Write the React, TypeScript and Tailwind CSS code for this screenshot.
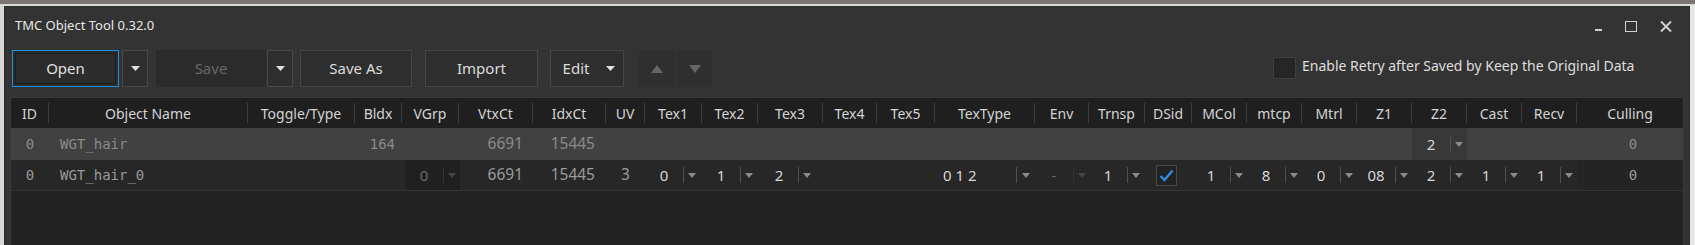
import React from "react";

const COLS =
  "grid grid-cols-[38px_199px_107px_47px_57px_74px_73px_39px_57px_56px_65px_54px_58px_100px_54px_56px_47px_55px_55px_55px_55px_55px_55px_55px_106px]";

const SANS = "font-['Noto_Sans',sans-serif]";
const MONO = "font-['DejaVu_Sans_Mono',monospace]";

const headers = [
  "ID", "Object Name", "Toggle/Type", "Bldx", "VGrp", "VtxCt", "IdxCt", "UV",
  "Tex1", "Tex2", "Tex3", "Tex4", "Tex5", "TexType", "Env", "Trnsp", "DSid",
  "MCol", "mtcp", "Mtrl", "Z1", "Z2", "Cast", "Recv", "Culling",
];

function Tri({ color = "#e0e0e0", w = 9, h = 5 }: { color?: string; w?: number; h?: number }) {
  return (
    <svg width={w} height={h} viewBox={`0 0 ${w} ${h}`}>
      <polygon points={`0,0 ${w},0 ${w / 2},${h}`} fill={color} />
    </svg>
  );
}

function TriUp({ color = "#666" }: { color?: string }) {
  return (
    <svg width={12} height={8} viewBox="0 0 12 8">
      <polygon points="0,8 12,8 6,0" fill={color} />
    </svg>
  );
}

function TriDown({ color = "#666" }: { color?: string }) {
  return (
    <svg width={12} height={8} viewBox="0 0 12 8">
      <polygon points="0,0 12,0 6,8" fill={color} />
    </svg>
  );
}

function Combo({
  value,
  disabled = false,
  bg = "",
}: {
  value: string;
  disabled?: boolean;
  bg?: string;
}) {
  return (
    <div className={`flex h-full w-[55px] items-center ${bg}`}>
      <span
        className={`w-[38px] text-center text-[15px] ${SANS} ${disabled ? "text-[#6a6a6a]" : "text-[#d6d6d6]"}`}
      >
        {value}
      </span>
      <span className={`h-[16px] w-px ${disabled ? "bg-[#333]" : "bg-[#4e4e4e]"}`} />
      <span className="flex w-[16px] justify-center">
        <Tri color={disabled ? "#444" : "#8a8a8a"} w={8} h={5} />
      </span>
    </div>
  );
}

function Btn({
  children,
  className = "",
}: {
  children: React.ReactNode;
  className?: string;
}) {
  return (
    <div
      className={`flex h-[37px] items-center justify-center border text-[15px] text-[#dcdcdc] ${SANS} ${className}`}
    >
      {children}
    </div>
  );
}

export default function App() {
  return (
    <div className="flex h-[245px] w-[1695px] flex-col overflow-hidden bg-[#dedede]">
      <div className="h-[4px] w-full shrink-0 bg-[#7c7573]" />
      <div className="h-[2px] w-full shrink-0 bg-[#d9d9d9]" />
      <div className="flex flex-1">
        <div className="w-[4px] shrink-0 bg-[#d6d6d6]" />
        <div className="flex w-[1686px] flex-col border-x border-[#2a2a2a] bg-[#333333]">
          {/* Title bar */}
          <div className="flex h-[40px] shrink-0 items-center justify-between pl-[10px]">
            <span className={`text-[13px] text-[#e6e6e6] ${SANS}`}>TMC Object Tool 0.32.0</span>
            <div className="flex items-center gap-[23px] pr-[17px]">
              <div className="mt-[8px] h-[2px] w-[7px] bg-[#cfcfcf]" />
              <div className="h-[11px] w-[12px] border-[1.5px] border-[#cfcfcf]" />
              <svg width="12" height="11" viewBox="0 0 12 11">
                <path d="M1 0.5 L11 10.5 M11 0.5 L1 10.5" stroke="#cfcfcf" strokeWidth="2" />
              </svg>
            </div>
          </div>

          {/* Toolbar */}
          <div className="mt-[4px] flex shrink-0 items-start pl-[7px]">
            <div className="relative flex h-[37px] w-[107px] items-center justify-center border border-[#1e8fe0] bg-[#2c2c2c]">
              <div className="absolute inset-[2px] border border-dotted border-[#0a0a0a]" />
              <span className={`text-[15px] text-[#e0e0e0] ${SANS}`}>Open</span>
            </div>
            <Btn className="ml-[3px] w-[26px] border-[#474747] bg-[#2e2e2e]">
              <Tri />
            </Btn>
            <div
              className={`ml-[8px] flex h-[37px] w-[110px] items-center justify-center bg-[#2b2b2b] text-[15px] text-[#676767] ${SANS}`}
            >
              Save
            </div>
            <Btn className="ml-[1px] w-[26px] border-[#474747] bg-[#2e2e2e]">
              <Tri />
            </Btn>
            <Btn className="ml-[7px] w-[112px] border-[#454545] bg-[#2e2e2e]">Save As</Btn>
            <Btn className="ml-[13px] w-[113px] border-[#454545] bg-[#2e2e2e]">Import</Btn>
            <Btn className="ml-[12px] w-[74px] gap-[17px] border-[#454545] bg-[#2e2e2e] pl-[4px]">
              <span>Edit</span>
              <Tri />
            </Btn>
            <div className="ml-[15px] flex h-[37px] w-[35px] items-center justify-center bg-[#2f2f2f]">
              <TriUp />
            </div>
            <div className="ml-[3px] flex h-[37px] w-[35px] items-center justify-center bg-[#2f2f2f]">
              <TriDown />
            </div>
            <div className="ml-[561px] mt-[7px] flex items-start gap-[6px]">
              <div className="h-[22px] w-[23px] border border-[#3e3e3e] bg-[#262626]" />
              <span className={`-mt-[2px] text-[14px] text-[#dedede] ${SANS}`}>
                Enable Retry after Saved by Keep the Original Data
              </span>
            </div>
          </div>

          {/* Table */}
          <div className="ml-[5px] mt-[10px] flex w-[1674px] flex-1 flex-col border-x border-t border-[#3a3a3a] bg-[#222222]">
            {/* Header */}
            <div className={`${COLS} h-[30px] bg-[#1f1f1f]`}>
              {headers.map((h, i) => (
                <div key={h} className="flex items-center">
                  <span className={`flex-1 text-center text-[14px] text-[#d4d4d4] ${SANS}`}>{h}</span>
                  {i < headers.length - 1 && <span className="h-[20px] w-px bg-[#3c3c3c]" />}
                </div>
              ))}
            </div>

            {/* Row 1 (selected) */}
            <div className={`${COLS} h-[32px] bg-[#414141] text-[#8a8a8a]`}>
              <div className={`flex items-center justify-center text-[14px] ${MONO}`}>0</div>
              <div className={`flex items-center pl-[11px] text-[14px] ${MONO}`}>WGT_hair</div>
              <div />
              <div className={`flex items-center justify-end pr-[7px] text-[14px] ${MONO}`}>164</div>
              <div />
              <div className={`flex items-center justify-end pr-[10px] text-[15.5px] ${SANS}`}>6691</div>
              <div className={`flex items-center justify-end pr-[11px] text-[15.5px] ${SANS}`}>15445</div>
              <div />
              <div />
              <div />
              <div />
              <div />
              <div />
              <div />
              <div />
              <div />
              <div />
              <div />
              <div />
              <div />
              <div />
              <div className="flex items-center">
                <Combo value="2" bg="bg-[#383838]" />
              </div>
              <div />
              <div />
              <div className={`flex items-center justify-center pl-[6px] text-[14px] ${MONO}`}>0</div>
            </div>

            {/* Row 2 */}
            <div className={`${COLS} h-[31px] border-b border-[#333] bg-[#272727] text-[#9a9a9a]`}>
              <div className={`flex items-center justify-center text-[14px] ${MONO}`}>0</div>
              <div className={`flex items-center pl-[11px] text-[14px] ${MONO}`}>WGT_hair_0</div>
              <div />
              <div />
              <div className="flex items-center pl-[3px]">
                <Combo value="0" disabled bg="bg-[#202020]" />
              </div>
              <div className={`flex items-center justify-end pr-[10px] text-[15.5px] ${SANS}`}>6691</div>
              <div className={`flex items-center justify-end pr-[11px] text-[15.5px] ${SANS}`}>15445</div>
              <div className={`flex items-center justify-center text-[15.5px] ${SANS}`}>3</div>
              <div className="flex items-center">
                <Combo value="0" />
              </div>
              <div className="flex items-center">
                <Combo value="1" />
              </div>
              <div className="flex items-center pl-[2px]">
                <Combo value="2" />
              </div>
              <div />
              <div />
              <div className="flex items-center">
                <span className={`w-[81px] pl-[8px] text-[15px] text-[#d6d6d6] ${SANS}`}>0 1 2</span>
                <span className="h-[16px] w-px bg-[#4e4e4e]" />
                <span className="flex w-[18px] justify-center">
                  <Tri color="#8a8a8a" w={8} h={5} />
                </span>
              </div>
              <div className="flex items-center">
                <Combo value="-" disabled />
              </div>
              <div className="flex items-center">
                <Combo value="1" />
              </div>
              <div className="flex items-center pl-[11px]">
                <div className="flex h-[21px] w-[21px] items-center justify-center border border-[#474747] bg-[#222]">
                  <svg width="15" height="13" viewBox="0 0 15 13">
                    <path d="M1.5 7 L5.5 11 L13.5 1.5" fill="none" stroke="#2d8fe6" strokeWidth="2.4" />
                  </svg>
                </div>
              </div>
              <div className="flex items-center">
                <Combo value="1" />
              </div>
              <div className="flex items-center">
                <Combo value="8" />
              </div>
              <div className="flex items-center">
                <Combo value="0" />
              </div>
              <div className="flex items-center">
                <Combo value="08" />
              </div>
              <div className="flex items-center">
                <Combo value="2" />
              </div>
              <div className="flex items-center">
                <Combo value="1" />
              </div>
              <div className="flex items-center">
                <Combo value="1" />
              </div>
              <div className={`flex items-center justify-center bg-[#242424] pl-[6px] text-[14px] ${MONO}`}>0</div>
            </div>
            <div className="flex-1" />
          </div>
        </div>
        <div className="w-[5px] shrink-0 bg-[#e8e8e8]" />
      </div>
    </div>
  );
}
